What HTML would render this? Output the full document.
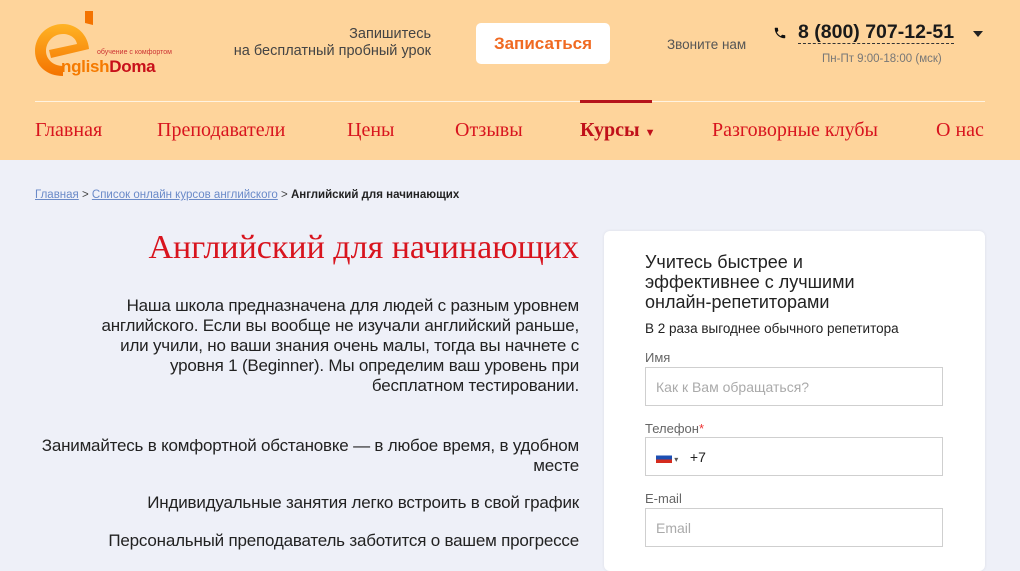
<!DOCTYPE html>
<html><head><meta charset="utf-8"><style>
*{margin:0;padding:0;box-sizing:border-box}
body{width:1020px;height:557px;overflow:hidden;background:#eef0f8;font-family:"Liberation Sans",sans-serif;position:relative}
.hdr{position:absolute;left:0;top:0;width:1020px;height:160px;background:#fed49b}
.abs{position:absolute}
.nav a{position:absolute;top:119px;font-family:"Liberation Serif",serif;font-size:20px;color:#d8141e;text-decoration:none}
.fld{position:absolute;left:645px;width:298px;height:39px;border:1px solid #cfcfcf;background:#fff;font-size:14px;color:#aaa;padding:11px 10px}
.lbl{position:absolute;left:645px;font-size:13px;color:#666}
.p{position:absolute;right:441px;text-align:right;font-size:17px;color:#222;line-height:20px;white-space:nowrap;letter-spacing:-0.2px}
</style></head><body>
<div class="hdr"></div>
<svg class="abs" style="left:33px;top:8px" width="66" height="70" viewBox="0 0 66 70">
<defs><linearGradient id="g" x1="0" y1="0" x2="0" y2="1"><stop offset="0" stop-color="#ffb324"/><stop offset="1" stop-color="#f47300"/></linearGradient></defs>
<path d="M30 16 C14 16 2 28 2 43 C2 58 14 68 30 68 L30 58 C20 58 13 51 13 43 C13 34 20 26 30 26 C37 26 43 30 44 36 L16 42 L18 50 L56 41 C55 27 44 16 30 16Z" fill="url(#g)"/>
<path d="M52 3 L60 3 L60 17 L52 15Z" fill="#f47300"/>
</svg>
<div class="abs" style="left:97px;top:49px;font-size:7px;color:#c33">обучение с комфортом</div>
<div class="abs" style="left:61px;top:57px;font-size:17px;font-weight:bold;color:#f57a00;letter-spacing:-0.3px">nglish<span style="color:#c8101a">Doma</span></div>
<div class="abs" style="left:220px;top:26px;width:211px;text-align:right;font-size:14.5px;color:#444;line-height:17px">Запишитесь<br>на бесплатный пробный урок</div>
<div class="abs" style="left:476px;top:23px;width:134px;height:41px;background:#fff;border-radius:5px;color:#f06a22;font-size:17px;font-weight:bold;text-align:center;line-height:41px">Записаться</div>
<div class="abs" style="left:667px;top:37px;font-size:13.5px;color:#555">Звоните нам</div>
<svg class="abs" style="left:773px;top:26px" width="14" height="14" viewBox="0 0 24 24"><path d="M6.6 10.8a15 15 0 0 0 6.6 6.6l2.2-2.2c.3-.3.7-.4 1-.2 1.1.4 2.3.6 3.6.6.6 0 1 .4 1 1V20c0 .6-.4 1-1 1A17 17 0 0 1 3 4c0-.6.4-1 1-1h3.5c.6 0 1 .4 1 1 0 1.3.2 2.5.6 3.6.1.3 0 .7-.2 1z" fill="#111"/></svg>
<div class="abs" style="left:798px;top:21px;font-size:19.5px;font-weight:bold;color:#1a1a1a;border-bottom:1px dashed #333;line-height:22px">8 (800) 707-12-51</div>
<div class="abs" style="left:973px;top:31px;border-left:5px solid transparent;border-right:5px solid transparent;border-top:6px solid #222"></div>
<div class="abs" style="left:822px;top:53px;font-size:11.5px;color:#777">Пн-Пт 9:00-18:00 (мск)</div>
<div class="abs" style="left:35px;top:101px;width:950px;height:1px;background:#fff3e0"></div>
<div class="abs" style="left:580px;top:100px;width:72px;height:3px;background:#b5141b"></div>
<div class="nav">
<a style="left:35px">Главная</a><a style="left:157px">Преподаватели</a><a style="left:347px">Цены</a><a style="left:455px">Отзывы</a>
<a style="left:580px;font-weight:bold;color:#c0101a">Курсы <span style="font-size:11px">▼</span></a>
<a style="left:712px">Разговорные клубы</a><a style="left:936px">О нас</a></div>
<div class="abs" style="left:35px;top:189px;font-size:11.5px;color:#444"><span style="color:#6a8ac8;text-decoration:underline">Главная</span> &gt; <span style="color:#6a8ac8;text-decoration:underline">Список онлайн курсов английского</span> &gt; <b style="color:#222">Английский для начинающих</b></div>
<div class="abs" style="right:441px;top:229px;font-family:'Liberation Serif',serif;font-size:34px;color:#d8141e">Английский для начинающих</div>
<div class="p" style="top:296px">Наша школа предназначена для людей с разным уровнем<br>английского. Если вы вообще не изучали английский раньше,<br>или учили, но ваши знания очень малы, тогда вы начнете с<br>уровня 1 (Beginner). Мы определим ваш уровень при<br>бесплатном тестировании.</div>
<div class="p" style="top:436px">Занимайтесь в комфортной обстановке — в любое время, в удобном<br>месте</div>
<div class="p" style="top:493px">Индивидуальные занятия легко встроить в свой график</div>
<div class="p" style="top:531px">Персональный преподаватель заботится о вашем прогрессе</div>
<div class="abs" style="left:604px;top:231px;width:381px;height:340px;background:#fff;border-radius:6px;box-shadow:0 0 3px rgba(0,0,0,.08)"></div>
<div class="abs" style="left:645px;top:252px;font-size:18px;color:#222;line-height:20px">Учитесь быстрее и<br>эффективнее с лучшими<br>онлайн-репетиторами</div>
<div class="abs" style="left:645px;top:321px;font-size:13.5px;color:#222">В 2 раза выгоднее обычного репетитора</div>
<div class="lbl" style="top:350px">Имя</div>
<div class="fld" style="top:367px">Как к Вам обращаться?</div>
<div class="lbl" style="top:421px">Телефон<span style="color:#e33">*</span></div>
<div class="fld" style="top:437px;color:#222"><span style="display:inline-block;width:16px;height:11px;vertical-align:-1px;background:linear-gradient(#fff 33%,#1c4fb3 33%,#1c4fb3 66%,#d52b1e 66%)"></span><span style="font-size:8px;color:#555"> ▾</span>&nbsp;&nbsp; +7</div>
<div class="lbl" style="top:491px">E-mail</div>
<div class="fld" style="top:508px">Email</div>
</body></html>
